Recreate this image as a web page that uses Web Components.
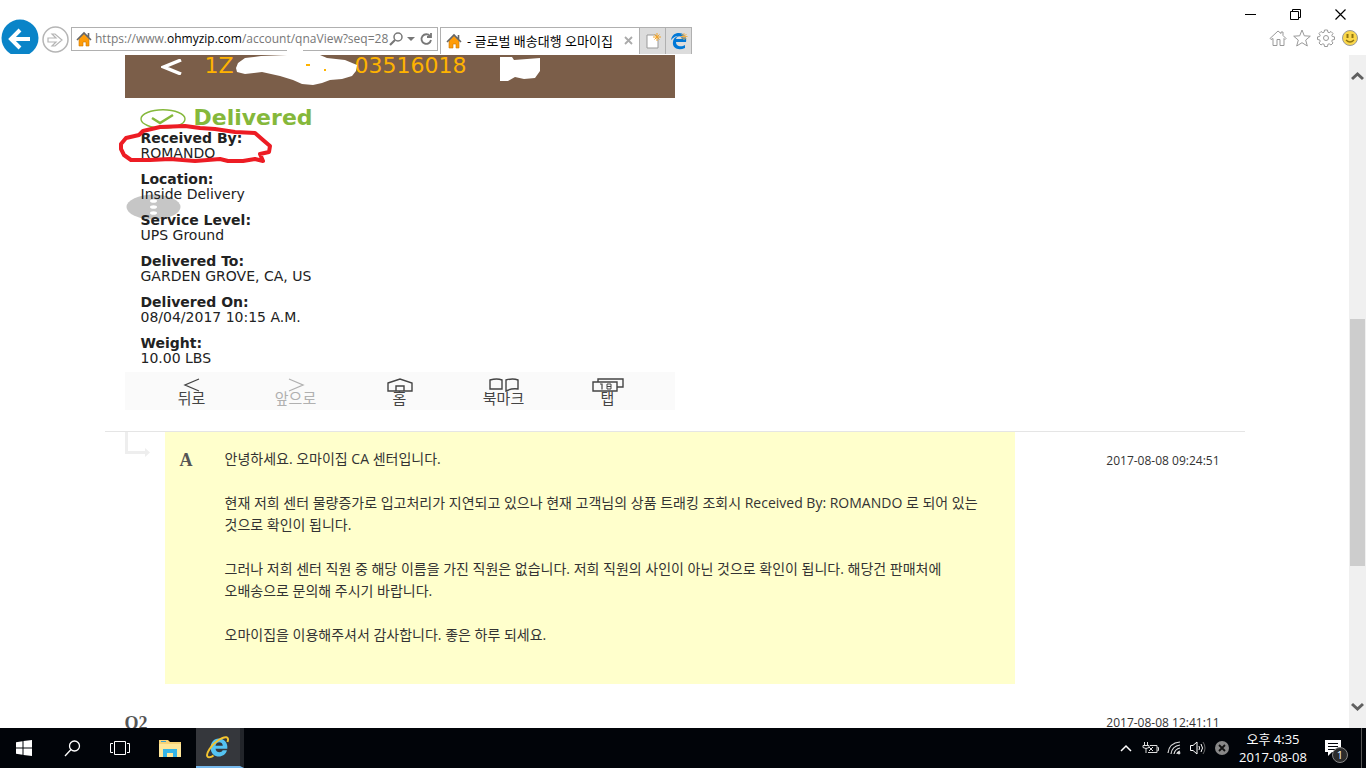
<!DOCTYPE html>
<html lang="ko">
<head>
<meta charset="utf-8">
<title>글로벌 배송대행 오마이집</title>
<style>
  html, body { height: 100%; margin: 0; }
  body {
    display: flex;
    flex-direction: column;
    overflow: hidden;
    background: #fff;
    color: #333;
    font: 12px/18px "Open Sans", "Noto Sans CJK KR", sans-serif;
  }
  main { flex: 1; min-height: 0; display: flex; }
</style>
</head>
<body>
  <browser-bar></browser-bar>
  <main>
    <qna-page>
      <tracking-photo slot="photo">
        <tracking-field label="Received By:">ROMANDO</tracking-field>
        <tracking-field label="Location:">Inside Delivery</tracking-field>
        <tracking-field label="Service Level:">UPS Ground</tracking-field>
        <tracking-field label="Delivered To:">GARDEN GROVE, CA, US</tracking-field>
        <tracking-field label="Delivered On:">08/04/2017 10:15 A.M.</tracking-field>
        <tracking-field label="Weight:">10.00 LBS</tracking-field>
      </tracking-photo>
      <qna-answer date="2017-08-08 09:24:51">
        <p>안녕하세요. 오마이집 CA 센터입니다.</p>
        <p>현재 저희 센터 물량증가로 입고처리가 지연되고 있으나 현재 고객님의 상품 트래킹 조회시 Received By: ROMANDO 로 되어 있는 것으로 확인이 됩니다.</p>
        <p>그러나 저희 센터 직원 중 해당 이름을 가진 직원은 없습니다. 저희 직원의 사인이 아닌 것으로 확인이 됩니다. 해당건 판매처에 오배송으로 문의해 주시기 바랍니다.</p>
        <p>오마이집을 이용해주셔서 감사합니다. 좋은 하루 되세요.</p>
      </qna-answer>
      <qna-question date="2017-08-08 12:41:11">Q2</qna-question>
    </qna-page>
    <page-scrollbar></page-scrollbar>
  </main>
  <task-bar></task-bar>

<script>
const homeIcon = `
  <svg width="16" height="16" viewBox="0 0 16 16" aria-hidden="true">
    <path d="M3 8v7h4v-4h3v4h3V8L8 3z" fill="#ff9c08" stroke="#c97700" stroke-width=".6"/>
    <path d="M1 9l7-7 7 7M12.500 2v4" fill="none" stroke="#666" stroke-width="1.600"/>
  </svg>`;

class BrowserBar extends HTMLElement {
  constructor() {
    super();
    this.shadowDOM = this.attachShadow({ mode: 'open' });
  }

  connectedCallback() {
    this.render();
  }

  render() {
    this.shadowDOM.innerHTML = `
      <style>
        :host {
          display: flex;
          justify-content: space-between;
          height: 54px;
          padding-bottom: 1px;
          background: #fff;
        }
        button {
          display: flex;
          align-items: center;
          justify-content: center;
          padding: 0;
          border: none;
          background: none;
          font: inherit;
        }
        svg { display: block; flex: none; }
        .left { display: flex; align-items: flex-end; }
        .forward { margin: 0 2px 1px; }
        .address {
          position: relative;
          display: flex;
          align-items: center;
          box-sizing: border-box;
          width: 367px;
          height: 24px;
          margin-bottom: 3px;
          padding: 0 4px;
          border: 1px solid #b0b0b0;
        }
        .field { position: relative; flex: 1; min-width: 0; height: 20px; margin-left: 3px; }
        .field input {
          box-sizing: border-box;
          width: 100%;
          height: 20px;
          padding: 0;
          border: none;
          outline: none;
          background: none;
          font: inherit;
        }
        .url {
          position: absolute;
          inset: 0;
          overflow: hidden;
          line-height: 20px;
          white-space: nowrap;
          color: #777;
          pointer-events: none;
        }
        .url b { font-weight: normal; color: #000; }
        .field input:focus + .url { display: none; }
        .tools { display: flex; align-items: center; gap: 4px; }
        .notch {
          position: absolute;
          left: 215px;
          bottom: -1px;
          width: 16px;
          height: 1px;
          background: #fff;
        }
        .tab, .extra {
          display: flex;
          align-items: center;
          box-sizing: border-box;
          height: 27px;
          border: 1px solid #b0b0b0;
          border-bottom: none;
        }
        .tab { width: 200px; gap: 5px; margin-left: 2px; padding: 0 5px; color: #000; font-size: 13px; }
        .tab span { flex: 1; white-space: nowrap; overflow: hidden; }
        .extra { width: 27px; margin-left: -1px; background: #dcdcdc; }
        .right { display: flex; flex-direction: column; align-items: flex-end; }
        .window { display: flex; padding-right: 3px; }
        .window button { width: 45px; height: 28px; }
        .commands { display: flex; gap: 6px; padding: 1px 7px 0 0; }
      </style>
      <div class="left">
        <button aria-label="뒤로">
          <svg width="40" height="36" viewBox="0 0 40 36">
            <circle cx="20" cy="20" r="18.500" fill="#0a84c8"/>
            <path d="M30 21H12M20 12l-9 9 9 9" fill="none" stroke="#fff" stroke-width="4"/>
          </svg>
        </button>
        <button class="forward" aria-label="앞으로">
          <svg width="27" height="27" viewBox="0 0 27 27" fill="none" stroke="#b5b5b5">
            <circle cx="13.500" cy="13.500" r="12.500" stroke-width="1.500"/>
            <path d="M6 12h8l-4-4h3l7 6-7 6h-3l4-4H6z" stroke-width="1.200"/>
          </svg>
        </button>
        <div class="address">
          ${homeIcon}
          <div class="field">
            <input type="text" aria-label="주소">
            <span class="url">https://www.<b>ohmyzip.com</b>/account/qnaView?seq=28</span>
          </div>
          <div class="tools">
            <button aria-label="검색">
              <svg width="14" height="14" viewBox="0 0 14 14" fill="none" stroke="#777">
                <circle cx="9" cy="5" r="4" stroke-width="1.500"/><path d="M6 8l-5 5" stroke-width="2.200"/>
              </svg>
            </button>
            <button aria-label="목록">
              <svg width="8" height="5" viewBox="0 0 8 5"><path d="M0 0h8L4 4z" fill="#777"/></svg>
            </button>
            <button aria-label="새로 고침">
              <svg width="14" height="14" viewBox="0 0 14 14" fill="none" stroke="#777" stroke-width="1.800">
                <path d="M11 4a4.800 4.800 0 1 0 1 4M12 1v4H8"/>
              </svg>
            </button>
          </div>
          <i class="notch"></i>
        </div>
        <div class="tab">
          ${homeIcon}
          <span>- 글로벌 배송대행 오마이집</span>
          <button aria-label="탭 닫기">
            <svg width="10" height="10" viewBox="0 0 10 10"><path d="M1 1l7 7M8 1L1 8" stroke="#aaa" stroke-width="1.800"/></svg>
          </button>
        </div>
        <button class="extra" aria-label="새 탭">
          <svg width="18" height="18" viewBox="0 0 18 18">
            <path d="M3 3h9l2 3v10H3z" fill="#fff" stroke="#999"/>
            <path d="M13 1v8M9 5h8M10.500 2.500l5 5M15.500 2.500l-5 5" stroke="#f2a428"/>
          </svg>
        </button>
        <button class="extra" aria-label="Edge">
          <svg width="18" height="18" viewBox="0 0 18 18">
            <path d="M1 8C2 2 6 1 9 1c5 0 8 4 7 9H6c0 5 6 5 9 3v3C8 19 2 16 3 10c0-3 2-5 5-6-3 0-5 2-7 4zm5-1h6c-1-4-5-3-6 0z" fill="#0078d7"/>
            <path d="M14 1v7M10.500 4.500h7M11.500 2l5 5M16.500 2l-5 5" stroke="#f2b04c"/>
          </svg>
        </button>
      </div>
      <div class="right">
        <div class="window">
          <button aria-label="최소화">
            <svg width="11" height="11" viewBox="0 0 11 11"><path d="M0 5.500h11" stroke="#000"/></svg>
          </button>
          <button aria-label="이전 크기로 복원">
            <svg width="11" height="11" viewBox="0 0 11 11" fill="none" stroke="#000">
              <path d="M.5 2.500h8v8h-8zM2.500 2V.5h8v8H9"/>
            </svg>
          </button>
          <button aria-label="닫기">
            <svg width="11" height="11" viewBox="0 0 11 11"><path d="M.5.5l10 10M10.500.5l-10 10" stroke="#000" stroke-width="1.200"/></svg>
          </button>
        </div>
        <div class="commands">
          <button aria-label="홈">
            <svg width="18" height="18" viewBox="0 0 18 18" fill="none" stroke="#999">
              <path d="M1 9.500L9 2l3 2.500V3h2v3.500l3 3-1 1-1-1v7h-4v-6H8v6H4v-7l-2 1z"/>
            </svg>
          </button>
          <button aria-label="즐겨찾기">
            <svg width="18" height="18" viewBox="0 0 18 18" fill="none" stroke="#999">
              <path d="M9 1l2.300 5.800 6 .4-4.600 3.900 1.600 5.900L9 13.700 3.700 17l1.600-5.900L.7 7.200l6-.4z"/>
            </svg>
          </button>
          <button aria-label="도구">
            <svg width="18" height="18" viewBox="0 0 18 18" fill="none" stroke="#999">
              <path d="M7.500 1h3l.4 2.200 1.300.5L14 2.500 16 4.500l-1.200 1.800.5 1.200 2.200.4v2.600l-2.200.4-.5 1.300 1.200 1.800-2 2-1.800-1.200-1.300.5-.4 2.200h-3l-.4-2.200-1.300-.5L4 16l-2-2 1.200-1.800-.5-1.300-2.200-.4V7.900l2.200-.4.5-1.200L2 4.500l2-2 1.800 1.200 1.300-.5z"/>
              <circle cx="9" cy="9" r="2.500"/>
            </svg>
          </button>
          <button aria-label="의견 보내기">
            <svg width="18" height="18" viewBox="0 0 18 18">
              <circle cx="9" cy="9" r="7.500" fill="#fbd84b" stroke="#999"/>
              <path d="M6.500 5v4M11.500 5v4" stroke="#8f7411" stroke-width="2"/>
              <path d="M5 11q4 4 8 0" fill="none" stroke="#8f7411" stroke-width="1.200"/>
            </svg>
          </button>
        </div>
      </div>`;

    // the formatted address gives way to the plain one while it is edited
    const input = this.shadowDOM.querySelector('input');
    const url = this.shadowDOM.querySelector('.url');
    input.addEventListener('focus', () => { input.value = url.textContent; });
    input.addEventListener('blur', () => { input.value = ''; });
  }
}

class QnaPage extends HTMLElement {
  constructor() {
    super();
    this.attachShadow({ mode: 'open' }).innerHTML = `
      <style>
        :host { display: block; flex: 1; min-width: 0; overflow: hidden; }
        .container { max-width: 1140px; margin: 0 auto; }
        .photo { padding: 0 20px 21px; }
      </style>
      <div class="container">
        <div class="photo"><slot name="photo"></slot></div>
        <slot></slot>
      </div>`;
  }
}

class TrackingField extends HTMLElement {
  connectedCallback() {
    this.attachShadow({ mode: 'open' }).innerHTML = `
      <style>
        :host { display: block; line-height: 15px; }
        b { display: block; }
      </style>
      <b>${this.getAttribute('label')}</b>
      <slot></slot>`;
  }
}

class TrackingPhoto extends HTMLElement {
  constructor() {
    super();
    this.attachShadow({ mode: 'open' }).innerHTML = `
      <style>
        :host {
          display: block;
          position: relative;
          max-width: 550px;
          font-family: "DejaVu Sans", "Noto Sans CJK KR", sans-serif;
          font-size: 14px;
          color: #222;
        }
        svg { display: block; flex: none; }
        header {
          display: flex;
          align-items: flex-start;
          box-sizing: border-box;
          height: 43px;
          background: #7b5e49;
          color: #ffb300;
          font-size: 22px;
          line-height: 22px;
        }
        .back { margin: 4px 22px 0 36px; }
        .prefix { width: 150px; }
        .status {
          display: flex;
          align-items: center;
          gap: 8px;
          height: 33px;
          padding: 7px 15px 0;
          box-sizing: border-box;
          color: #85b83b;
          font-size: 22px;
          line-height: 22px;
          font-weight: bold;
        }
        .status svg { margin-top: 2px; }
        .fields { display: grid; gap: 11px; padding: 0 16px 6px; }
        nav {
          display: grid;
          grid-template-columns: repeat(5, 1fr);
          height: 38px;
          padding: 0 15px;
          background: #fafafa;
        }
        nav button {
          display: flex;
          flex-direction: column;
          align-items: center;
          padding: 6px 0 0;
          border: none;
          background: none;
          color: #444;
          font: inherit;
          font-size: 15px;
          line-height: 15px;
        }
        nav button:disabled { color: #b0b0b0; }
        .under, .over { position: absolute; left: 0; top: 0; overflow: visible; }
        .under { z-index: -1; }
        .over { pointer-events: none; }
      </style>
      <svg class="under" width="550" height="356" viewBox="0 0 550 356">
        <ellipse cx="28.500" cy="152" rx="27" ry="12.500" fill="#c6c6c6"/>
        <g fill="#fff"><ellipse cx="28.500" cy="146" rx="3.500" ry="1.800"/><ellipse cx="28.500" cy="152" rx="3.500" ry="1.800"/><ellipse cx="28.500" cy="158" rx="3.500" ry="1.800"/></g>
      </svg>
      <header>
        <svg class="back" width="22" height="16" viewBox="0 0 22 16"><path d="M20 1L3 8l17 7" fill="none" stroke="#fff" stroke-width="3.500"/></svg>
        <span class="prefix">1Z</span>
        <span>03516018</span>
      </header>
      <div class="status">
        <svg width="46" height="20" viewBox="0 0 46 20" fill="none" stroke="#85b83b">
          <ellipse cx="23" cy="10" rx="22" ry="9.200" stroke-width="1.400"/>
          <path d="M12 9l8 5 13-8" stroke-width="2.500"/>
        </svg>
        <span>Delivered</span>
      </div>
      <div class="fields"><slot></slot></div>
      <nav>
        <button>
          <svg width="32" height="14" viewBox="0 0 32 14" fill="none" stroke="currentColor" stroke-width="1.300"><path d="M23 1L9 7l14 6"/></svg>
          뒤로
        </button>
        <button disabled>
          <svg width="32" height="14" viewBox="0 0 32 14" fill="none" stroke="currentColor" stroke-width="1.300"><path d="M9 1l14 6-14 6"/></svg>
          앞으로
        </button>
        <button>
          <svg width="32" height="14" viewBox="0 0 32 14" fill="none" stroke="currentColor" stroke-width="1.400"><path d="M4 5l12-4 12 4v8H4zM12 13V8h8v5"/></svg>
          홈
        </button>
        <button>
          <svg width="32" height="14" viewBox="0 0 32 14" fill="none" stroke="currentColor" stroke-width="1.400"><path d="M2 2q7-2 12 0v9H2zM18 2q7-2 12 0v9q-6-1-12 2z"/></svg>
          북마크
        </button>
        <button>
          <svg width="32" height="14" viewBox="0 0 32 14" fill="none" stroke="currentColor" stroke-width="1.400">
            <path d="M1 4h24v9H1zM6 4V1h25v8h-6"/>
            <path d="M10 5.500v6M8 6h2" stroke-width="1.200"/><path d="M15 6h4v5h-4zM15 8.500h4" stroke-width="1"/>
          </svg>
          탭
        </button>
      </nav>
      <svg class="over" width="550" height="356" viewBox="0 0 550 356">
        <path d="M111 13l2-5 7-5 16-2 26-1h33l7 3 18 2 12 5-1 6-4 5-10 3-12 1-8 3-9 2-11-1-9-4-13-4-18-4-17 2-8-2zM375 2h12l2 3 26-2v13l-5 7-11 1-9-2-7 4h-8z" fill="#fff"/>
        <path d="M181 10h4M199 15h2" stroke="#ffb300" stroke-width="2"/>
        <path d="M138 106l-8-2-12 2h-15l-8-2-25 2-25-2-20 1H6l-7-5-3-6v-5l5-6 13-3 4-4 17-4 25-1 15 2 15 1 20 3 20 1 8 7 7 6-1 6-9 2z" fill="none" stroke="#ed1c24" stroke-width="4" stroke-linejoin="round"/>
      </svg>`;
  }
}

class QnaAnswer extends HTMLElement {
  connectedCallback() {
    this.attachShadow({ mode: 'open' }).innerHTML = `
      <style>
        :host { display: flex; border-top: 1px solid #e5e5e5; }
        .arrow { flex: 0 0 40px; padding-left: 20px; }
        .answer {
          flex: 1;
          display: flex;
          box-sizing: border-box;
          padding: 16px 15px 38px;
          background: #ffffcc;
        }
        .mark {
          flex: 0 0 45px;
          font: bold 18px/24px "Liberation Serif", serif;
          color: #555;
        }
        .text { display: grid; gap: 22px; font-size: 14px; line-height: 22px; word-break: keep-all; }
        ::slotted(p) { margin: 0; }
        time { flex: 0 0 205px; padding: 20px 25px 0 0; text-align: right; }
      </style>
      <div class="arrow">
        <svg width="26" height="26" viewBox="0 0 26 26"><path d="M1.500 0v20.500H21" fill="none" stroke="#eee" stroke-width="3"/><path d="M20 16l5 4.500-5 4.500z" fill="#eee"/></svg>
      </div>
      <div class="answer">
        <div class="mark">A</div>
        <div class="text"><slot></slot></div>
      </div>
      <time>${this.getAttribute('date')}</time>`;
  }
}

class QnaQuestion extends HTMLElement {
  connectedCallback() {
    this.attachShadow({ mode: 'open' }).innerHTML = `
      <style>
        :host { display: flex; justify-content: space-between; padding: 30px 25px 0 20px; }
        strong { font: bold 18px/18px "Liberation Serif", serif; color: #555; }
      </style>
      <strong><slot></slot></strong>
      <time>${this.getAttribute('date')}</time>`;
  }
}

class PageScrollbar extends HTMLElement {
  constructor() {
    super();
    this.attachShadow({ mode: 'open' }).innerHTML = `
      <style>
        :host { display: flex; flex-direction: column; width: 17px; background: #f0f0f0; }
        button { flex: 0 0 42px; padding: 0 2px; border: none; background: none; }
        svg { display: block; margin: auto; }
        .track { flex: 1; display: grid; grid-template-rows: 222fr 247fr 120fr; }
        .thumb { grid-row: 2; margin: 0 1px; background: #cdcdcd; }
      </style>
      <button aria-label="위로"><svg width="13" height="10" viewBox="0 0 13 10"><path d="M1 8l5.500-5L12 8" fill="none" stroke="#606060" stroke-width="3"/></svg></button>
      <div class="track"><div class="thumb"></div></div>
      <button aria-label="아래로"><svg width="13" height="10" viewBox="0 0 13 10"><path d="M1 2l5.500 5L12 2" fill="none" stroke="#606060" stroke-width="3"/></svg></button>`;
  }
}

class TaskBar extends HTMLElement {
  constructor() {
    super();
    this.attachShadow({ mode: 'open' }).innerHTML = `
      <style>
        :host {
          display: flex;
          justify-content: space-between;
          height: 40px;
          background: #010409;
          color: #fff;
        }
        .apps, .tray { display: flex; }
        button {
          display: flex;
          align-items: center;
          justify-content: center;
          padding: 0;
          border: none;
          background: none;
          color: inherit;
          font: inherit;
        }
        svg { display: block; }
        .apps button { width: 48px; box-sizing: border-box; }
        .apps .files { width: 52px; }
        .apps .active {
          border-bottom: 2px solid #76b9ed;
          border-right: 4px solid #22252a;
          background: #35373c;
        }
        .tray button { width: 24px; }
        .tray .clock { width: 78px; flex-direction: column; font-size: 13px; }
        .tray .notice { position: relative; width: 42px; margin-right: 7px; }
        .count {
          position: absolute;
          left: 20px;
          top: 19px;
          width: 14px;
          height: 14px;
          border: 1px solid #888;
          border-radius: 50%;
          background: #2b2b2b;
          font-size: 11px;
          line-height: 14px;
        }
        .desktop { width: 4px; border-left: 1px solid #555; }
      </style>
      <div class="apps">
        <button aria-label="시작">
          <svg width="16" height="16" viewBox="0 0 16 16" fill="#fff"><path d="M0 2.200L6.500 1.200v6.300H0zM7.500 1L16 0v7.500H7.500zM0 8.500h6.500v6.300L0 13.800zM7.500 8.500H16V16l-8.500-1z"/></svg>
        </button>
        <button aria-label="검색">
          <svg width="17" height="17" viewBox="0 0 17 17" fill="none" stroke="#fff" stroke-width="1.300"><circle cx="10.500" cy="6" r="5"/><path d="M7 9.500L1 16"/></svg>
        </button>
        <button aria-label="작업 보기">
          <svg width="20" height="16" viewBox="0 0 20 16" fill="none" stroke="#fff"><path d="M4.500 1.500h11v13h-11zM3 3.500H.5v9H3M17 3.500h2.500v9H17"/></svg>
        </button>
        <button class="files" aria-label="파일 탐색기">
          <svg width="22" height="18" viewBox="0 0 22 18">
            <path d="M0 1h9l2 2h11v15H0z" fill="#f7d276"/><path d="M0 5h22v13H0z" fill="#ffe799"/>
            <path d="M4 18v-8h14v8h-4v-4H8v4z" fill="#34b4e6"/><path d="M2 2.500h5" stroke="#3aa0d0"/>
          </svg>
        </button>
        <button class="active" aria-label="Internet Explorer">
          <svg width="24" height="24" viewBox="0 0 24 24">
            <path d="M12.500 3.500c6 0 9.500 4.500 8.800 10.200H9.500c.5 4.600 6.300 4.300 7.200 1.600h4.200C19 24 5 24 4.600 13 4.500 7.500 8 3.500 12.500 3.500zM9.500 10.700h7.300c-.2-4.500-6.600-4.500-7.300 0z" fill="#55c3f2"/>
            <path d="M21.500 7c2-5.500-2-6.500-9-2C5 10-.500 19 1.500 21.500c1 1.500 4 .5 6-1" fill="none" stroke="#f4c430" stroke-width="2"/>
          </svg>
        </button>
      </div>
      <div class="tray">
        <button aria-label="숨겨진 아이콘 표시">
          <svg width="12" height="8" viewBox="0 0 12 8"><path d="M1 7l5-5 5 5" fill="none" stroke="#fff" stroke-width="1.500"/></svg>
        </button>
        <button aria-label="배터리">
          <svg width="17" height="12" viewBox="0 0 17 12" fill="none" stroke="#ddd"><path d="M2.500 0v3M5.500 0v3M1 3.500h6v2q-3 2-6 0zM4 6v5M6 10.500h9v-7H8M15.500 5.500h1v3h-1M7 5l4 4M11 5L7 9"/></svg>
        </button>
        <button aria-label="네트워크">
          <svg width="14" height="14" viewBox="0 0 14 14" fill="none" stroke="#ddd"><path d="M1 12Q2 2 13 1M4 13q1-8 9-9M7 13q1-5 6-6M10 13q0-2 3-3" stroke-width="1.200"/><circle cx="12" cy="12" r="1" fill="#fff"/></svg>
        </button>
        <button aria-label="볼륨">
          <svg width="16" height="14" viewBox="0 0 16 14" fill="none" stroke="#fff"><path d="M.5 4.500H3l4-3.500v12L3 9.500H.5z"/><path d="M9 5q1 2 0 4M11 3q3 4 0 8"/><path d="M13 1q4 6 0 12" stroke="#666"/></svg>
        </button>
        <button aria-label="상태">
          <svg width="14" height="14" viewBox="0 0 14 14"><circle cx="7" cy="7" r="7" fill="#888"/><path d="M4 4l6 6M10 4l-6 6" stroke="#111" stroke-width="1.800"/></svg>
        </button>
        <button class="clock"><span>오후 4:35</span><span>2017-08-08</span></button>
        <button class="notice" aria-label="알림 1">
          <svg width="16" height="16" viewBox="0 0 16 16"><path d="M0 0h16v12H7l-4 4v-4H0z" fill="#fff"/><path d="M3 3.500h10M3 6.500h10M3 9.500h7" stroke="#010409"/></svg>
          <span class="count">1</span>
        </button>
        <div class="desktop"></div>
      </div>`;
  }
}

customElements.define('browser-bar', BrowserBar);
customElements.define('qna-page', QnaPage);
customElements.define('tracking-field', TrackingField);
customElements.define('tracking-photo', TrackingPhoto);
customElements.define('qna-answer', QnaAnswer);
customElements.define('qna-question', QnaQuestion);
customElements.define('page-scrollbar', PageScrollbar);
customElements.define('task-bar', TaskBar);
</script>
</body>
</html>
